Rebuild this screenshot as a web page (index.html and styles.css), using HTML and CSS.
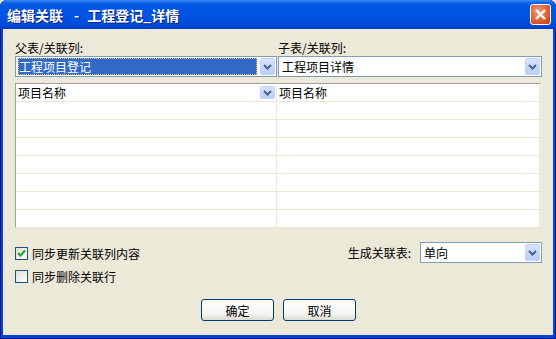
FILE: index.html
```html
<!DOCTYPE html>
<html lang="zh-CN">
<head>
    <meta charset="UTF-8">
    <title>编辑关联</title>
    <link rel="stylesheet" href="styles.css">
</head>
<body>
<div class="window">
    <div class="titlebar">
        <span class="title">编辑关联<span class="dash">-</span>工程登记_详情</span>
        <span class="close">
            <svg width="13" height="13" viewBox="0 0 13 13"><path d="M2 2L11 11M11 2L2 11" stroke="#fff" stroke-width="2.4"/></svg>
        </span>
    </div>
    <div class="client">
        <div class="pickers">
            <div class="picker">
                <div class="label">父表/关联列:</div>
                <div class="combo">
                    <span class="value selected">工程项目登记</span>
                    <span class="arrow"><svg width="9" height="6" viewBox="0 0 9 6"><path d="M1 1L4.5 4.5L8 1" stroke="#4d6185" stroke-width="2" fill="none"/></svg></span>
                </div>
            </div>
            <div class="picker">
                <div class="label">子表/关联列:</div>
                <div class="combo">
                    <span class="value">工程项目详情</span>
                    <span class="arrow"><svg width="9" height="6" viewBox="0 0 9 6"><path d="M1 1L4.5 4.5L8 1" stroke="#4d6185" stroke-width="2" fill="none"/></svg></span>
                </div>
            </div>
        </div>
        <div class="grid">
            <div class="cell head">项目名称
                <span class="arrow small"><svg width="9" height="6" viewBox="0 0 9 6"><path d="M1 1L4.5 4.5L8 1" stroke="#4d6185" stroke-width="2" fill="none"/></svg></span>
            </div>
            <div class="cell head">项目名称</div>
            <div class="cell"></div><div class="cell"></div>
            <div class="cell"></div><div class="cell"></div>
            <div class="cell"></div><div class="cell"></div>
            <div class="cell"></div><div class="cell"></div>
            <div class="cell"></div><div class="cell"></div>
            <div class="cell"></div><div class="cell"></div>
            <div class="cell"></div><div class="cell"></div>
        </div>
        <div class="options">
            <div class="checks">
                <label class="check"><span class="box on"><svg width="9" height="8" viewBox="0 0 9 8"><path d="M1 4L3.5 6.5L8 1.5" stroke="#21a121" stroke-width="2" fill="none"/></svg></span>同步更新关联列内容</label>
                <label class="check"><span class="box"></span>同步删除关联行</label>
            </div>
            <div class="mode">
                <span class="label">生成关联表:</span>
                <div class="combo short">
                    <span class="value">单向</span>
                    <span class="arrow"><svg width="9" height="6" viewBox="0 0 9 6"><path d="M1 1L4.5 4.5L8 1" stroke="#4d6185" stroke-width="2" fill="none"/></svg></span>
                </div>
            </div>
        </div>
        <div class="buttons">
            <button class="btn">确定</button>
            <button class="btn">取消</button>
        </div>
    </div>
</div>
</body>
</html>
```

FILE: styles.css
```css
*{
    margin: 0;
    padding: 0;
    box-sizing: border-box;
}
body{
    background: #ece9d8;
    font-family: "Noto Sans CJK SC", "DejaVu Sans", sans-serif;
    font-size: 12px;
    color: #000;
}
/*窗口外框*/
.window{
    width: 556px;
    height: 339px;
    display: flex;
    flex-direction: column;
    background: #0046d5;
    border-radius: 7px 7px 0 0;
    box-shadow: inset 1px 0 #00138c, inset -1px 0 #00138c, inset 0 -1px #00138c;
}
/*标题栏*/
.titlebar{
    height: 29px;
    display: flex;
    align-items: center;
    justify-content: space-between;
    padding: 0 5px 0 7px;
    border-radius: 7px 7px 0 0;
    background: linear-gradient(#3d8ff5 0, #0a60e8 3px, #0056e6 7px, #0052e2 18px, #0049d8 25px, #003dc4 29px);
}
.title{
    color: #fff;
    font-weight: bold;
    font-size: 14px;
    text-shadow: 1px 1px #0a1e7a;
    display: flex;
    align-items: center;
}
.title .dash{
    margin: 0 8px 0 11px;
}
.close{
    width: 21px;
    height: 21px;
    border: 1px solid #fff;
    border-radius: 3px;
    background: radial-gradient(circle at 40% 35%, #f0a080, #e0602f 55%, #c43a14);
    display: flex;
    align-items: center;
    justify-content: center;
}
/*客户区*/
.client{
    flex: 1;
    margin: 0 3px 4px 3px;
    background: #ece9d8;
    padding: 11px 11px 0 12px;
}
.pickers{
    display: grid;
    grid-template-columns: 262px 264px;
    column-gap: 1px;
}
.label{
    height: 16px;
    line-height: 16px;
    color: #000;
}
.combo{
    height: 21px;
    border: 1px solid #7f9db9;
    background: #fff;
    display: flex;
    align-items: center;
    padding: 1px 1px 1px 2px;
}
.combo .value{
    flex: 1;
    height: 17px;
    line-height: 17px;
    padding-left: 1px;
}
.combo .value.selected{
    background: #316ac5;
    color: #fff;
    outline: 1px dotted #e0c060;
    outline-offset: -1px;
    margin-right: 3px;
}
.arrow{
    width: 15px;
    height: 17px;
    border-radius: 2px;
    background: linear-gradient(#d7e3fd, #b8cdf8);
    border: 1px solid #c3d3fd;
    display: flex;
    align-items: center;
    justify-content: center;
}
.arrow.small{
    height: 13px;
    width: 15px;
}
/*表格*/
.grid{
    margin-top: 6px;
    height: 145px;
    width: 526px;
    display: grid;
    grid-template-columns: 261px 1fr;
    grid-auto-rows: 18px;
    background: #fff;
    border-top: 1px solid #a0a0a0;
    border-left: 1px solid #a0a0a0;
    border-right: 1px solid #f1efe2;
    border-bottom: 1px solid #f1efe2;
}
.cell{
    border-bottom: 1px solid #ebe8d6;
    border-right: 1px solid #ebe8d6;
    padding-left: 2px;
    line-height: 17px;
}
.cell.head{
    display: flex;
    justify-content: space-between;
    align-items: center;
    padding-right: 1px;
}
/*选项*/
.options{
    margin-top: 14px;
    display: flex;
    justify-content: space-between;
    align-items: flex-start;
}
.checks{
    display: flex;
    flex-direction: column;
    gap: 7px;
    padding-top: 3px;
}
.check{
    display: flex;
    align-items: center;
    gap: 4px;
    height: 16px;
}
.box{
    width: 13px;
    height: 13px;
    border: 1px solid #1c5180;
    background: linear-gradient(135deg, #dcdcd7, #fff);
    display: flex;
    align-items: center;
    justify-content: center;
}
.mode{
    display: flex;
    align-items: center;
    gap: 9px;
}
.combo.short{
    width: 122px;
}
/*按钮*/
.buttons{
    margin-top: 15px;
    display: flex;
    justify-content: center;
    gap: 9px;
}
.btn{
    width: 73px;
    height: 22px;
    border: 1px solid #003c74;
    border-radius: 3px;
    background: linear-gradient(#fff, #f4f4f0 70%, #dcdad0);
    font-family: "Noto Sans CJK SC", sans-serif;
    font-size: 12px;
    color: #000;
}
```
